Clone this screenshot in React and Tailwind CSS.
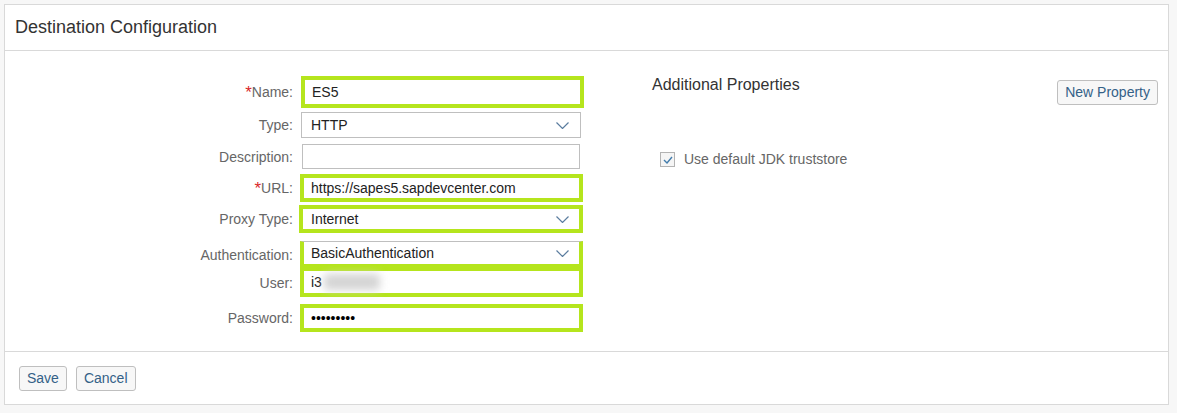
import React from 'react';

function Chevron() {
  return (
    <svg width="13" height="7" viewBox="0 0 13 7" className="shrink-0">
      <polyline points="0.5,0.5 6.5,6.5 12.5,0.5" fill="none" stroke="#5b7d9f" strokeWidth="1.2" />
    </svg>
  );
}

function Label({ children, required }) {
  return (
    <div className="w-[288px] shrink-0 text-right text-[14px] text-[#666] leading-none pr-0">
      {required && <span className="text-[#d9282b] text-[17px] align-[-1px]">*</span>}
      {children}
    </div>
  );
}

export default function App() {
  return (
    <div className="min-h-[413px] bg-[#f7f7f7] pt-1 pl-1 font-['Liberation_Sans',Arial,sans-serif]">
      <div className="w-[1165px] border border-[#d9d9d9] bg-white">
        {/* header */}
        <div className="h-[46px] border-b border-[#d9d9d9] pl-[10px] flex items-center text-[18px] text-[#333]">
          Destination Configuration
        </div>

        {/* body */}
        <div className="h-[301px] border-b border-[#d9d9d9] flex pt-[25px]">
          <div className="w-[579px] shrink-0 text-[14px] text-[#222]">
            <div className="flex items-center h-[32px]">
              <Label required>Name:</Label>
              <div className="ml-[8px] w-[283px] h-[32px] border-4 border-[#b5e51d] flex items-center pl-[7px]">ES5</div>
            </div>
            <div className="flex items-center h-[26px] mt-[4px]">
              <Label>Type:</Label>
              <div className="ml-[8px] w-[280px] h-[26px] border border-[#bfbfbf] flex items-center justify-between pl-[9px] pr-[11px]">
                <span>HTTP</span>
                <Chevron />
              </div>
            </div>
            <div className="flex items-center h-[25px] mt-[6px]">
              <Label>Description:</Label>
              <div className="ml-[9px] w-[278px] h-[25px] border border-[#bfbfbf]"></div>
            </div>
            <div className="flex items-center h-[28px] mt-[5px]">
              <Label required>URL:</Label>
              <div className="ml-[7px] w-[283px] h-[28px] border-4 border-[#b5e51d] flex items-center pl-[7px]">https://sapes5.sapdevcenter.com</div>
            </div>
            <div className="flex items-center h-[28px] mt-[3px]">
              <Label>Proxy Type:</Label>
              <div className="ml-[6px] w-[284px] h-[28px] border-4 border-[#b5e51d] flex items-center justify-between pl-[8px] pr-[10px]">
                <span>Internet</span>
                <Chevron />
              </div>
            </div>
            <div className="flex items-center h-[27px] mt-[8px]">
              <Label>Authentication:</Label>
              <div className="ml-[7px] w-[283px] h-[27px] border-x-4 border-b-4 border-t border-x-[#b5e51d] border-b-[#b5e51d] border-t-[#bfbfbf] flex items-center justify-between pl-[7px] pr-[10px]">
                <span>BasicAuthentication</span>
                <Chevron />
              </div>
            </div>
            <div className="flex items-center h-[29px]">
              <Label>User:</Label>
              <div className="ml-[7px] w-[283px] h-[29px] border-4 border-t-[3px] border-[#b5e51d] flex items-center pl-[7px]">
                <span>i3</span>
                <span className="ml-[2px] inline-block w-[56px] h-[16px] bg-[#d4d4d4] blur-[4px] rounded"></span>
              </div>
            </div>
            <div className="flex items-center h-[28px] mt-[7px]">
              <Label>Password:</Label>
              <div className="ml-[7px] w-[283px] h-[28px] border-4 border-[#b5e51d] flex items-center pl-[7px] text-[14px] text-black">
                •••••••••
              </div>
            </div>
          </div>

          <div className="flex-1 ml-[68px] pr-[10px]">
            <div className="flex justify-between items-start">
              <div className="text-[16px] leading-[18px] text-[#333]">Additional Properties</div>
              <button className="mt-[4px] h-[25px] px-[7px] border border-[#bfbfbf] rounded-[3px] bg-[#f7f7f7] text-[14px] text-[#346187]">
                New Property
              </button>
            </div>
            <div className="mt-[44px] pl-[8px] flex items-center">
              <div className="w-[15px] h-[15px] border border-[#b3b3b3] bg-[#f5f5f5] flex items-center justify-center">
                <svg width="10" height="8" viewBox="0 0 10 8">
                  <polyline points="1,4 4,7 9,1" fill="none" stroke="#427cac" strokeWidth="1.4" />
                </svg>
              </div>
              <span className="ml-[9px] text-[14px] text-[#666]">Use default JDK truststore</span>
            </div>
          </div>
        </div>

        {/* footer */}
        <div className="h-[52px] flex items-center pl-[14px] gap-[9px]">
          <button className="h-[25px] px-[7px] border border-[#bfbfbf] rounded-[3px] bg-[#f7f7f7] text-[14px] text-[#346187]">Save</button>
          <button className="h-[25px] px-[7px] border border-[#bfbfbf] rounded-[3px] bg-[#f7f7f7] text-[14px] text-[#346187]">Cancel</button>
        </div>
      </div>
    </div>
  );
}
